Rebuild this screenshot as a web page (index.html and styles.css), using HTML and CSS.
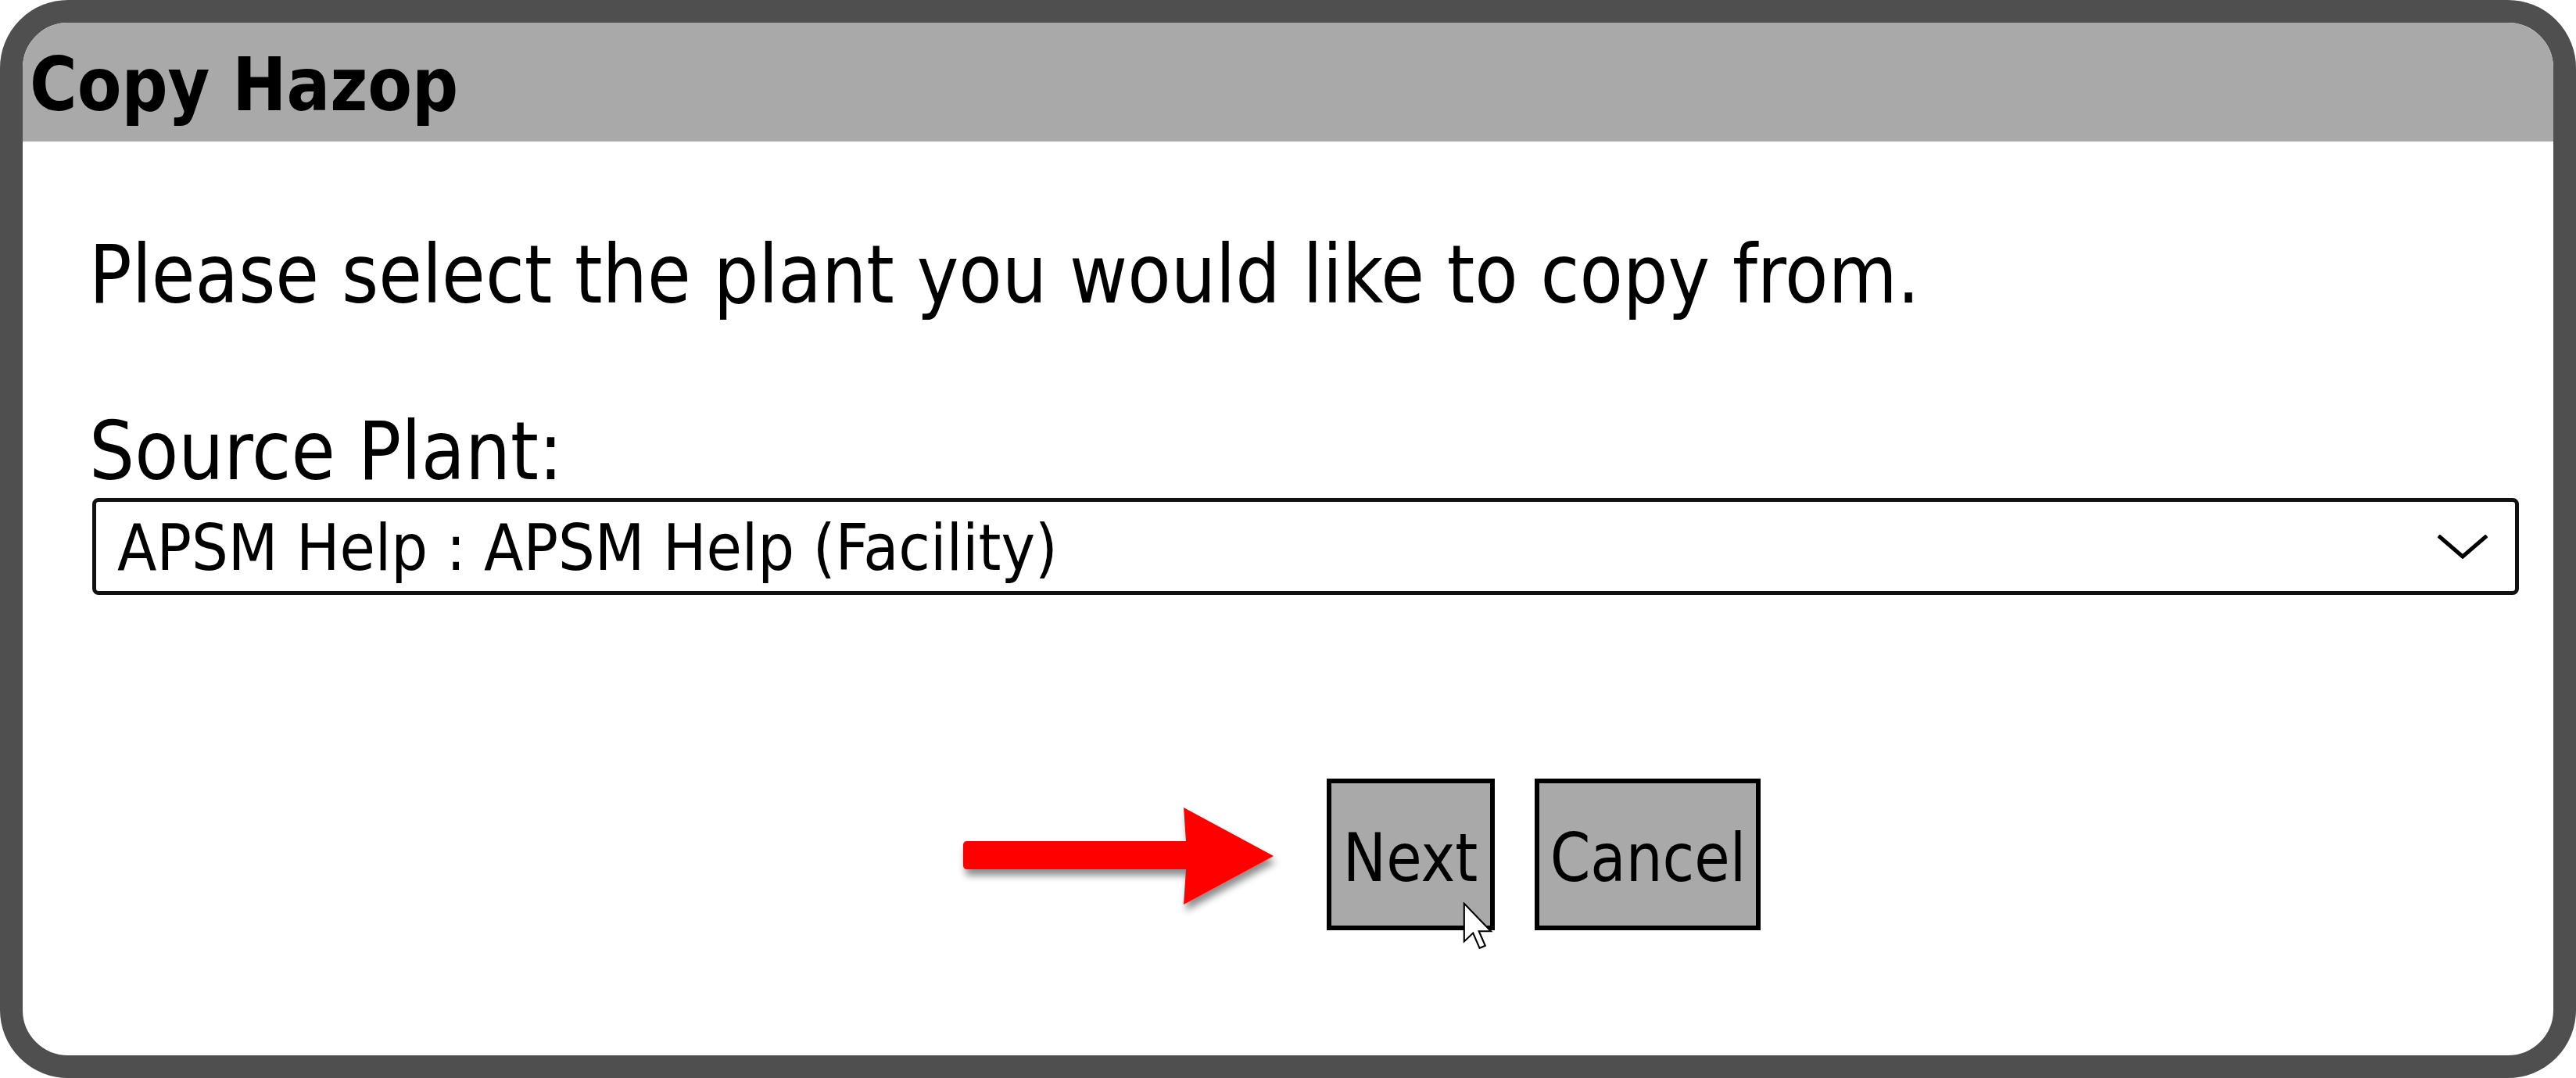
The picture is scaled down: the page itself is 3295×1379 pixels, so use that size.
FILE: index.html
```html
<!DOCTYPE html>
<html lang="en">
<head>
<meta charset="utf-8">
<title>Copy Hazop</title>
<link rel="stylesheet" href="styles.css">
</head>
<body>
<div class="dialog">
  <div class="title-bar">
    <h1 class="title"><span class="sx">Copy Hazop</span></h1>
  </div>
  <div class="content">
    <p class="prompt"><span class="sx sx-prompt">Please select the plant you would like to copy from.</span></p>
    <label class="field-label"><span class="sx sx-label">Source Plant:</span></label>
    <div class="select" role="combobox" aria-expanded="false">
      <span class="select-value sx sx-value">APSM Help : APSM Help (Facility)</span>
      <svg class="chevron" viewBox="0 0 64 31" width="64" height="31" aria-hidden="true">
        <polyline points="3,3 32,28 61,3" fill="none" stroke="#000" stroke-width="5" stroke-linecap="square" stroke-linejoin="miter"/>
      </svg>
    </div>
    <div class="actions">
      <button class="btn btn-next"><span class="sx-c">Next</span></button>
      <button class="btn btn-cancel"><span class="sx-c">Cancel</span></button>
    </div>
  </div>
  <svg class="pointer-arrow" viewBox="0 0 420 150" width="420" height="150" aria-hidden="true">
    <path d="M12,51 L292,51 L289,8 L404,70 L289,132 L292,87 L12,87 Q7,87 7,82 L7,56 Q7,51 12,51 Z" fill="#ff0000"/>
  </svg>
  <svg class="cursor" viewBox="0 0 13 21" width="39" height="63" aria-hidden="true">
    <path d="M0.6,0.6 L0.6,16.8 L4.4,13.2 L7.2,19.6 L9.6,18.6 L6.9,12.4 L12,12.4 Z" fill="#fff" stroke="#000" stroke-width="0.7" stroke-linejoin="miter"/>
  </svg>
</div>
</body>
</html>
```

FILE: styles.css
```css
html, body {
  margin: 0;
  padding: 0;
  background: #ffffff;
}

body {
  font-family: "DejaVu Sans", Verdana, sans-serif;
  color: #000;
}

.dialog {
  position: relative;
  box-sizing: border-box;
  width: 3295px;
  height: 1379px;
  border: 29px solid #4f4f4f;
  border-radius: 87px;
  background: #ffffff;
  overflow: hidden;
}

.title-bar {
  box-sizing: border-box;
  height: 152px;
  background: #a9a9a9;
  padding: 6px 0 0 9px;
}

.title {
  margin: 0;
  font-size: 95px;
  font-weight: bold;
  line-height: 146px;
}

.sx {
  display: inline-block;
  white-space: nowrap;
  transform: scaleX(0.87);
  transform-origin: 0 50%;
}

.sx-prompt {
  transform: scaleX(0.88);
}

.sx-label {
  transform: scaleX(0.89);
}

.sx-value {
  transform: scaleX(0.9);
}

.sx-c {
  display: inline-block;
  white-space: nowrap;
  transform: scaleX(0.87);
  transform-origin: 50% 50%;
}

.content {
  display: flex;
  flex-direction: column;
  align-items: flex-start;
  padding: 110px 0 0 85px;
}

.prompt {
  margin: 0;
  font-size: 103px;
  line-height: 120px;
}

.field-label {
  display: block;
  margin-top: 106px;
  font-size: 103px;
  line-height: 120px;
}

.select {
  box-sizing: border-box;
  display: flex;
  align-items: center;
  width: 3104px;
  height: 124px;
  margin-left: 4px;
  padding: 4px 35px 0 27px;
  border: 5px solid #111;
  border-radius: 8px;
  background: #fff;
  font-size: 82px;
  line-height: 96px;
}

.select-value {
  flex: 1;
}

.chevron {
  display: block;
  flex: none;
  margin-top: -4px;
}

.actions {
  display: flex;
  gap: 51px;
  margin-top: 235px;
  margin-left: 1583px;
}

.btn {
  box-sizing: border-box;
  display: flex;
  align-items: center;
  justify-content: center;
  height: 194px;
  margin: 0;
  padding: 10px 0 0 0;
  border: 6px solid #000;
  border-radius: 0;
  background: #a9a9a9;
  color: #000;
  font-family: "DejaVu Sans", Verdana, sans-serif;
  font-size: 85px;
  line-height: 100px;
}

.btn-next {
  width: 215px;
}

.btn-cancel {
  width: 289px;
}

.pointer-arrow {
  position: absolute;
  left: 1196px;
  top: 996px;
  filter: drop-shadow(3px 8px 5px rgba(0, 0, 0, 0.45));
}

.cursor {
  position: absolute;
  left: 1842px;
  top: 1125px;
}
```
